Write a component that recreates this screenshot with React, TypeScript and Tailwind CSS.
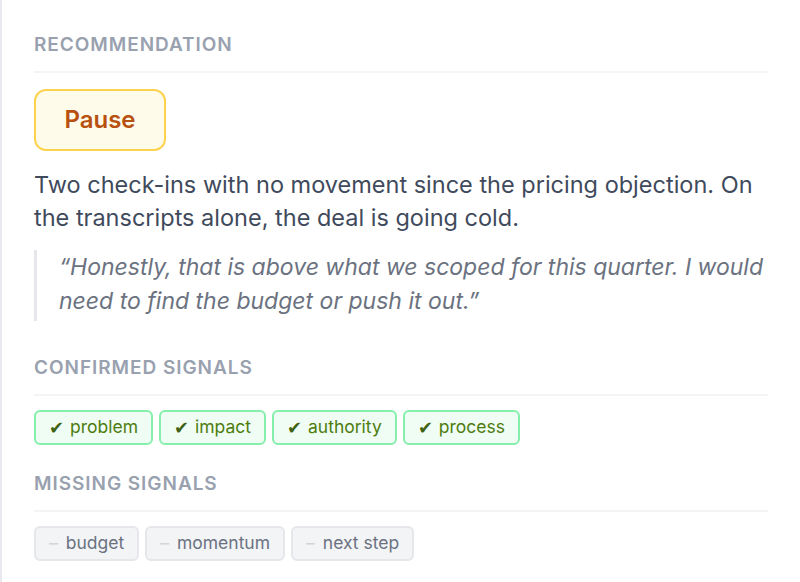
import React from 'react';

const confirmed = ['problem', 'impact', 'authority', 'process'];
const missing = ['budget', 'momentum', 'next step'];

function SectionLabel({ children }: { children: React.ReactNode }) {
  return (
    <div className="border-b-2 border-gray-100 pb-[14px] text-[19px] font-semibold uppercase leading-[24px] tracking-[0.05em] text-gray-400">
      {children}
    </div>
  );
}

export default function App() {
  return (
    <div
      className="min-h-[582px] border-l-2 border-[#e8e8ee] bg-white pl-[32px] pr-[32px] pt-[33px]"
      style={{ fontFamily: 'Inter, "Noto Sans", sans-serif' }}
    >
      <SectionLabel>Recommendation</SectionLabel>

      <div className="mt-[16px] inline-flex h-[62px] w-[132px] items-center justify-center rounded-[12px] border-2 border-[#fcd34d] bg-[#fffbeb] text-[24px] font-semibold text-[#b8500f]">
        Pause
      </div>

      <p className="mt-[17px] text-[23.5px] leading-[33px] text-[#3f4a5c]">
        Two check-ins with no movement since the pricing objection. On the transcripts alone, the deal is going cold.
      </p>

      <blockquote className="mt-[16px] border-l-[3px] border-gray-200 pb-[3px] pl-[22px] text-[23px] italic leading-[34px] text-[#6b7280]">
        “Honestly, that is above what we scoped for this quarter. I would need to find the budget or push it out.”
      </blockquote>

      <div className="mt-[35px]">
        <SectionLabel>Confirmed signals</SectionLabel>
      </div>
      <div className="mt-[14px] flex flex-wrap gap-[6px]">
        {confirmed.map((s) => (
          <span
            key={s}
            className="flex h-[35px] items-center gap-[6px] rounded-[6px] border-2 border-[#86efac] bg-[#f0fdf4] px-[13px] text-[17.5px] text-[#4d7c0f]"
          >
            <span className="text-[18px] text-[#3f6212]">✔</span>
            {s}
          </span>
        ))}
      </div>

      <div className="mt-[27px]">
        <SectionLabel>Missing signals</SectionLabel>
      </div>
      <div className="mt-[14px] flex flex-wrap gap-[6px]">
        {missing.map((s) => (
          <span
            key={s}
            className="flex h-[35px] items-center gap-[8px] rounded-[6px] border-2 border-gray-200 bg-gray-100 px-[13px] text-[17.5px] text-gray-500"
          >
            <span className="text-gray-300">–</span>
            {s}
          </span>
        ))}
      </div>
    </div>
  );
}
